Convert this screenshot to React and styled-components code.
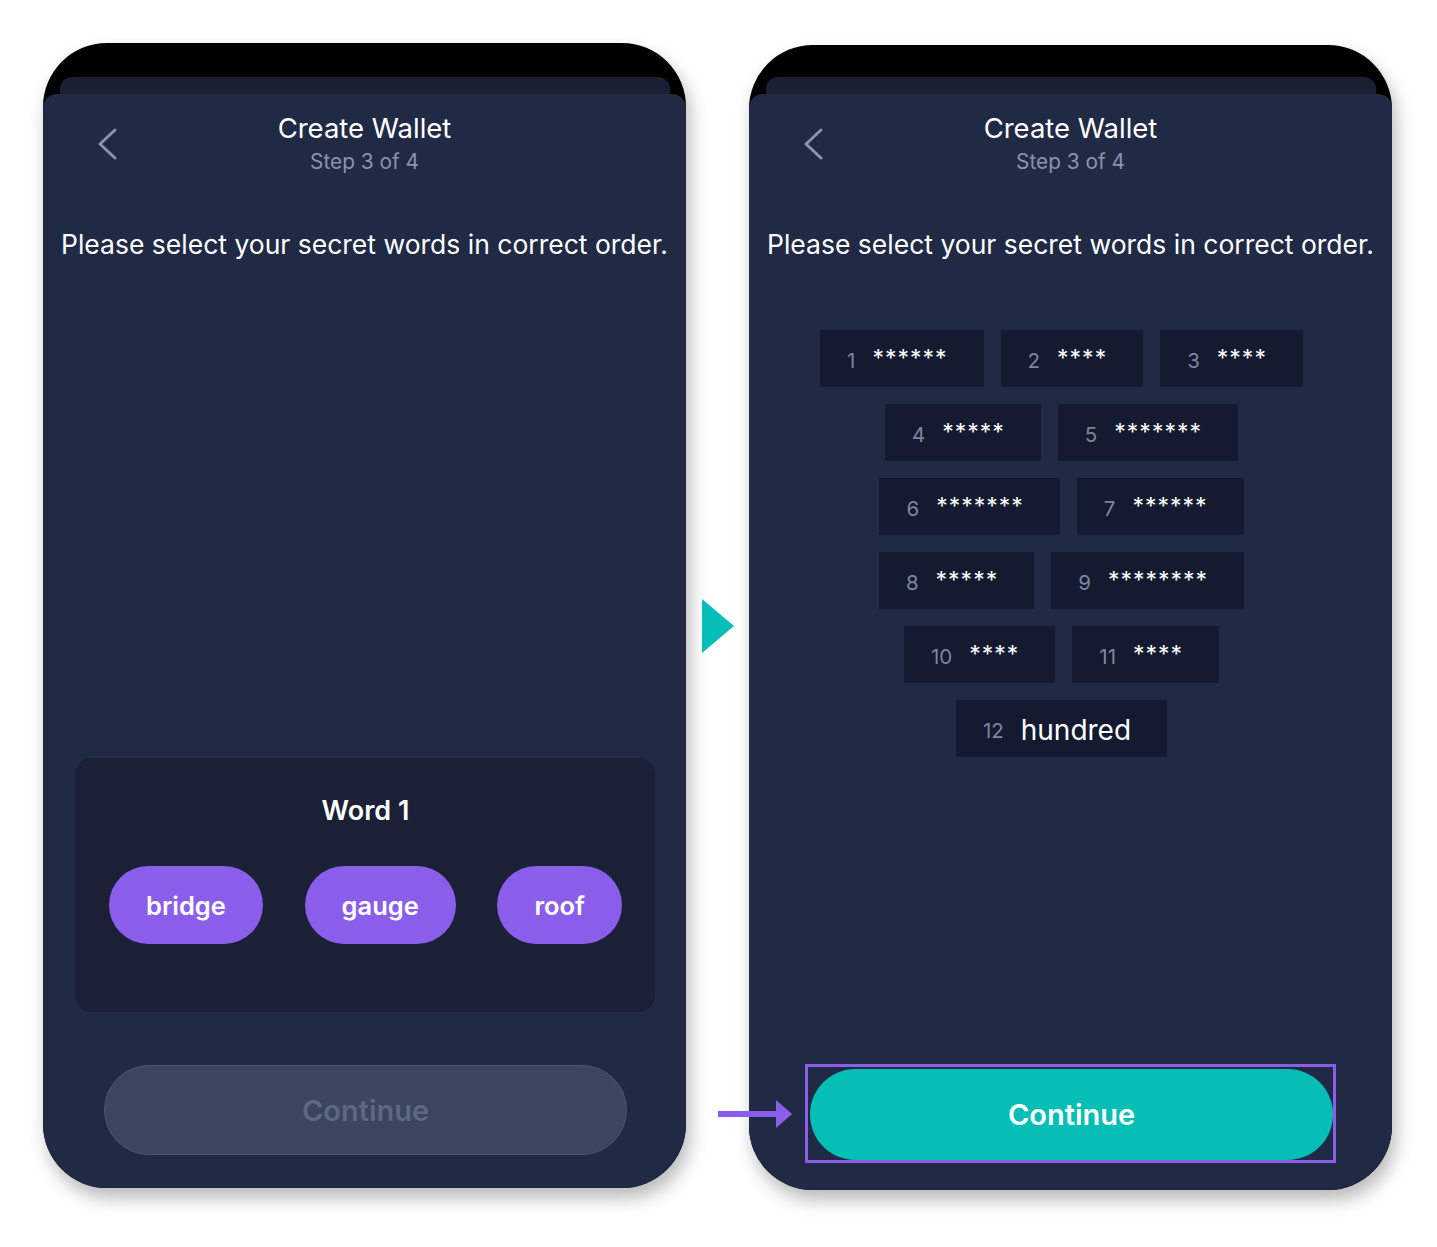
import React from 'react';
import styled, { createGlobalStyle } from 'styled-components';

const GlobalStyle = createGlobalStyle`
  body {
    margin: 0;
    background: #ffffff;
    font-family: Inter, "Noto Sans", sans-serif;
  }
`;

const Page = styled.div`
  display: flex;
  align-items: flex-start;
  padding: 43px 0 0 43px;
  width: 1437px;
  height: 1247px;
  box-sizing: border-box;
`;

const Phone = styled.div`
  width: 643px;
  height: 1145px;
  margin-top: ${(p) => p.$offset || 0}px;
  background: #000;
  border-radius: 64px;
  display: flex;
  flex-direction: column;
  padding-top: ${(p) => 34 - (p.$offset || 0)}px;
  box-sizing: border-box;
  box-shadow: 4px 10px 18px rgba(0, 0, 0, 0.28);
`;

const BackSheet = styled.div`
  height: 17px;
  margin: 0 16px 0 17px;
  background: #1a1f33;
  border-radius: 12px 12px 0 0;
`;

const Panel = styled.div`
  flex: 1;
  background: #212a45;
  border-radius: 14px 14px 64px 64px;
  display: flex;
  flex-direction: column;
`;

const Header = styled.div`
  display: grid;
  grid-template-columns: 1fr auto 1fr;
  align-items: center;
  padding: 18px 0 0;
`;

const BackButton = styled.div`
  padding-left: 53px;
  display: flex;
  align-items: center;
`;

const TitleBlock = styled.div`
  display: flex;
  flex-direction: column;
  align-items: center;
  gap: 5px;
`;

const Title = styled.div`
  color: #ffffff;
  font-size: 27.5px;
  line-height: 32px;
`;

const Step = styled.div`
  color: #8a93ab;
  font-size: 20.8px;
  line-height: 26px;
`;

const Prompt = styled.div`
  margin-top: 53px;
  text-align: center;
  color: #ffffff;
  font-size: 26.5px;
  line-height: 32px;
`;

const WordBox = styled.div`
  margin: auto 31px 0 32px;
  height: 254px;
  box-sizing: border-box;
  background: #1b2037;
  border-radius: 16px;
  padding: 36px 33px 0 34px;
  display: flex;
  flex-direction: column;
  align-items: center;
`;

const WordLabel = styled.div`
  color: #ffffff;
  font-weight: 600;
  font-size: 27px;
  line-height: 34px;
`;

const ChipRow = styled.div`
  align-self: stretch;
  display: flex;
  justify-content: space-between;
  margin-top: 38px;
`;

const Chip = styled.div`
  height: 78px;
  padding: 0 37px;
  border-radius: 39px;
  background: #8a5eea;
  color: #ffffff;
  font-weight: 600;
  font-size: 25.5px;
  display: flex;
  align-items: center;
  justify-content: center;
`;

const Footer = styled.div`
  margin: ${(p) => (p.$active ? 'auto' : '53px')} 59px ${(p) => p.$bottom}px 61px;
`;

const ContinueButton = styled.div`
  height: ${(p) => (p.$active ? 91 : 90)}px;
  box-sizing: border-box;
  border-radius: 46px;
  display: flex;
  align-items: center;
  justify-content: center;
  font-size: 29px;
  font-weight: 600;
  background: ${(p) => (p.$active ? '#05bfb7' : '#3b4560')};
  border: ${(p) => (p.$active ? 'none' : '1.5px solid #4b5672')};
  color: ${(p) => (p.$active ? '#ffffff' : '#5e6881')};
`;

const Highlight = styled.div`
  position: relative;
  margin: -5px -3px -3px -5px;
  padding: 2px 0 0 2px;
  border: 3px solid #8a5eea;
`;

const PointerArrow = styled.svg`
  position: absolute;
  left: -90px;
  top: 50%;
  transform: translateY(-50%);
`;

const Between = styled.div`
  width: 63px;
  display: flex;
  align-items: center;
  justify-content: center;
  padding-top: 20px;
  height: 1145px;
  box-sizing: border-box;
`;

const Grid = styled.div`
  margin-top: 70px;
  padding-right: 18px;
  display: flex;
  flex-direction: column;
  align-items: center;
  gap: 17px;
`;

const GridRow = styled.div`
  display: flex;
  gap: 17px;
`;

const Tile = styled.div`
  height: 57px;
  padding: 0 36px 0 27px;
  background: #141a2f;
  display: flex;
  align-items: center;
  gap: 17px;
`;

const TileNum = styled.span`
  color: #7d86a0;
  font-size: 20.5px;
  line-height: 24px;
  margin-top: 4px;
`;

const TileWord = styled.span`
  color: #ffffff;
  font-size: ${(p) => (p.$masked ? 23 : 28)}px;
  letter-spacing: ${(p) => (p.$masked ? '1px' : '0')};
  line-height: 30px;
  margin-top: ${(p) => (p.$masked ? -2 : 2)}px;
`;

const Chevron = () => (
  <svg width="22" height="34" viewBox="0 0 22 34">
    <polyline points="19,3 4,17 19,31" fill="none" stroke="#8a93ab" strokeWidth="3" strokeLinecap="round" strokeLinejoin="round" />
  </svg>
);

const ScreenHeader = () => (
  <>
    <Header>
      <BackButton>
        <Chevron />
      </BackButton>
      <TitleBlock>
        <Title>Create Wallet</Title>
        <Step>Step 3 of 4</Step>
      </TitleBlock>
      <div />
    </Header>
    <Prompt>Please select your secret words in correct order.</Prompt>
  </>
);

const rows = [
  [[1, '******'], [2, '****'], [3, '****']],
  [[4, '*****'], [5, '*******']],
  [[6, '*******'], [7, '******']],
  [[8, '*****'], [9, '********']],
  [[10, '****'], [11, '****']],
  [[12, 'hundred', true]],
];

const App = () => {
  return (
    <Page>
      <GlobalStyle />
      <Phone>
        <BackSheet />
        <Panel>
          <ScreenHeader />
          <WordBox>
            <WordLabel>Word 1</WordLabel>
            <ChipRow>
              <Chip>bridge</Chip>
              <Chip>gauge</Chip>
              <Chip>roof</Chip>
            </ChipRow>
          </WordBox>
          <Footer $bottom={33}>
            <ContinueButton>Continue</ContinueButton>
          </Footer>
        </Panel>
      </Phone>

      <Between>
        <svg width="32" height="54" viewBox="0 0 32 54">
          <polygon points="0,0 32,27 0,54" fill="#05bfb7" />
        </svg>
      </Between>

      <Phone $offset={2}>
        <BackSheet />
        <Panel>
          <ScreenHeader />
          <Grid>
            {rows.map((row, i) => (
              <GridRow key={i}>
                {row.map(([n, w, shown]) => (
                  <Tile key={n}>
                    <TileNum>{n}</TileNum>
                    <TileWord $masked={!shown}>{w}</TileWord>
                  </Tile>
                ))}
              </GridRow>
            ))}
          </Grid>
          <Footer $active $bottom={30}>
            <Highlight>
              <PointerArrow width="77" height="30" viewBox="0 0 77 30">
                <rect x="0" y="12" width="60" height="6" fill="#8a5eea" />
                <polygon points="58,1 74,15 58,29" fill="#8a5eea" />
              </PointerArrow>
              <ContinueButton $active>Continue</ContinueButton>
            </Highlight>
          </Footer>
        </Panel>
      </Phone>
    </Page>
  );
};

export default App;
